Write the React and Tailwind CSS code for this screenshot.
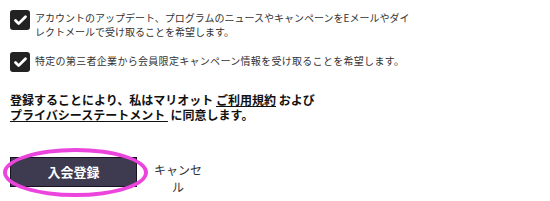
import { Check } from 'lucide-react';

function CheckRow({ children, className = '', textClass = '' }) {
  return (
    <div className={`flex items-start gap-[5px] ${className}`}>
      <span className="flex h-[20px] w-[20px] shrink-0 items-center justify-center rounded-[3px] bg-[#222]">
        <Check className="h-[15px] w-[15px] text-white" strokeWidth={4.5} />
      </span>
      <p className={`text-[10px] leading-[14px] text-[#333] ${textClass}`}>{children}</p>
    </div>
  );
}

export default function App() {
  return (
    <div
      className="h-[201px] w-[550px] overflow-hidden bg-white px-[10px] pt-[10px]"
      style={{ fontFamily: '"Noto Sans CJK JP", "Noto Sans", sans-serif' }}
    >
      <CheckRow textClass="mt-[1px]">
        アカウントのアップデート、プログラムのニュースやキャンペーンをEメールやダイ
        <br />
        レクトメールで受け取ることを希望します。
      </CheckRow>

      <CheckRow className="mt-[13px]" textClass="mt-[2px] tracking-[0.3px]">
        特定の第三者企業から会員限定キャンペーン情報を受け取ることを希望します。
      </CheckRow>

      <p className="mt-[20px] text-[12px] font-bold leading-[15px] text-[#111]">
        登録することにより、私はマリオット <span className="underline underline-offset-[1px]">ご利用規約</span> および
        <br />
        <span className="underline underline-offset-[1px]">プライバシーステートメント&nbsp;</span> に同意します。
      </p>

      <div className="relative mt-[35px] flex items-start">
        <button
          type="button"
          className="h-[30px] w-[127px] border border-[#151320] bg-[#3e3a50] text-[13px] font-bold text-white"
        >
          入会登録
        </button>
        <span className="ml-[16px] mt-[4px] w-[50px] text-center text-[12px] leading-[17px] text-[#333]">
          キャンセ
          <br />
          ル
        </span>
        <span className="pointer-events-none absolute left-[-7px] top-[-9px] h-[49px] w-[145px] rounded-[50%] border-[4px] border-[#ec45de]" />
      </div>
    </div>
  );
}
